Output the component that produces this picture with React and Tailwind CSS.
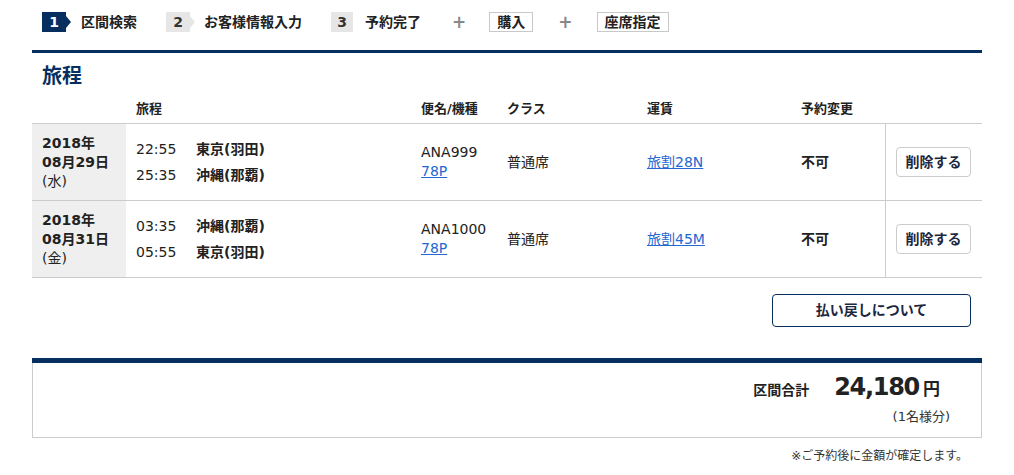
import React from 'react';

const NAVY = 'bg-[#062f60]';

const rows = [
  {
    year: '2018年',
    date: '08月29日',
    dow: '(水)',
    legs: [
      { time: '22:55', place: '東京(羽田)' },
      { time: '25:35', place: '沖縄(那覇)' },
    ],
    flight: 'ANA999',
    plane: '78P',
    seat: '普通席',
    fare: '旅割28N',
  },
  {
    year: '2018年',
    date: '08月31日',
    dow: '(金)',
    legs: [
      { time: '03:35', place: '沖縄(那覇)' },
      { time: '05:55', place: '東京(羽田)' },
    ],
    flight: 'ANA1000',
    plane: '78P',
    seat: '普通席',
    fare: '旅割45M',
  },
];

const cols = 'grid grid-cols-[94px_285px_86px_140px_154px_94px_97px]';

const StepBox = ({ n, active, arrow }) => (
  <div className="flex items-center">
    <div
      className={
        'w-[24px] h-[20px] flex items-center justify-center text-[14px] font-bold ' +
        (active ? 'bg-[#062f60] text-white' : 'bg-[#e6e6e6] text-[#333]')
      }
    >
      {n}
    </div>
    {arrow && (
      <div
        className={
          'w-0 h-0 border-y-[6px] border-y-transparent border-l-[5px] ' +
          (active ? 'border-l-[#062f60]' : 'border-l-[#e6e6e6]')
        }
      />
    )}
  </div>
);

const App = () => {
  return (
    <div
      className="w-[1014px] h-[475px] bg-white text-[#222] overflow-hidden"
      style={{ fontFamily: '"DejaVu Sans", "Noto Sans CJK JP", sans-serif' }}
    >
      <div className="ml-[32px] w-[950px] flex flex-col">
        {/* steps */}
        <div className="flex items-center pl-[10px] pt-[12px] h-[32px] text-[14px] font-bold leading-[20px]">
          <StepBox n="1" active arrow />
          <span className="ml-[10px]">区間検索</span>
          <div className="ml-[29px]">
            <StepBox n="2" arrow />
          </div>
          <span className="ml-[9px]">お客様情報入力</span>
          <div className="ml-[29px] w-[22px] h-[20px] bg-[#e6e6e6] flex items-center justify-center text-[#333]">3</div>
          <span className="ml-[12px]">予約完了</span>
          <span className="ml-[31px] text-[#888] text-[17px]">+</span>
          <span className="ml-[23px] h-[20px] px-[7px] border border-[#c8c8c8] flex items-center">購入</span>
          <span className="ml-[25px] text-[#888] text-[17px]">+</span>
          <span className="ml-[24px] h-[20px] px-[7px] border border-[#c8c8c8] flex items-center">座席指定</span>
        </div>

        <div className={'mt-[18px] h-[3px] ' + NAVY} />

        <h2 className="mt-[9px] pl-[10px] text-[20px] leading-[28px] font-bold text-[#062f60]">旅程</h2>

        {/* table header */}
        <div className={cols + ' text-[13px] font-bold leading-[19px] pt-[9px] pb-[5px] border-b border-[#cccccc]'}>
          <div />
          <div className="pl-[10px]">旅程</div>
          <div className="pl-[10px]">便名/機種</div>
          <div className="pl-[10px]">クラス</div>
          <div className="pl-[10px]">運賃</div>
          <div className="pl-[10px]">予約変更</div>
          <div />
        </div>

        {rows.map((r, i) => (
          <div key={i} className={cols + ' h-[77px] border-b border-[#cccccc] text-[14px]'}>
            <div className="bg-[#efefef] pl-[10px] flex flex-col justify-center leading-[19px]">
              <span className="font-bold">{r.year}</span>
              <span className="font-bold">{r.date}</span>
              <span>{r.dow}</span>
            </div>
            <div className="pl-[10px] flex flex-col justify-center leading-[26px]">
              {r.legs.map((l, j) => (
                <div key={j} className="flex">
                  <span className="w-[60px]">{l.time}</span>
                  <span className="font-bold">{l.place}</span>
                </div>
              ))}
            </div>
            <div className="pl-[10px] flex flex-col justify-center leading-[19px]">
              <span>{r.flight}</span>
              <a href="#" className="text-[#2468d2] underline">{r.plane}</a>
            </div>
            <div className="pl-[10px] flex items-center">{r.seat}</div>
            <div className="pl-[10px] flex items-center">
              <a href="#" className="text-[#2468d2] underline">{r.fare}</a>
            </div>
            <div className="pl-[10px] flex items-center font-bold">不可</div>
            <div className="border-l border-[#cccccc] flex items-center pl-[10px]">
              <button className="w-[75px] h-[30px] border border-[#cccccc] rounded-[4px] bg-white font-bold text-[14px] text-[#1c2740]">
                削除する
              </button>
            </div>
          </div>
        ))}

        <div className="flex justify-end mt-[16px] pr-[11px]">
          <button className="w-[199px] h-[33px] border border-[#062f60] rounded-[4px] bg-white font-bold text-[14px] text-[#1c2740]">
            払い戻しについて
          </button>
        </div>

        <div className={'mt-[31px] h-[5px] ' + NAVY} />
        <div className="h-[75px] border-x border-b border-[#cccccc] flex flex-col items-end pr-[31px] pt-[9px]">
          <div className="flex items-baseline mr-[10px] leading-[30px]">
            <span className="text-[14px] font-bold">区間合計</span>
            <span className="ml-[25px] text-[24px] font-bold tracking-[-1.3px]">24,180</span>
            <span className="ml-[4px] text-[17px] font-bold">円</span>
          </div>
          <div className="mt-[3px] text-[13px] leading-[18px] text-[#333]">(1名様分)</div>
        </div>

        <div className="mt-[10px] pr-[14px] text-right text-[12px] leading-[16px] text-[#333]">
          ※ご予約後に金額が確定します。
        </div>
      </div>
    </div>
  );
};

export default App;
